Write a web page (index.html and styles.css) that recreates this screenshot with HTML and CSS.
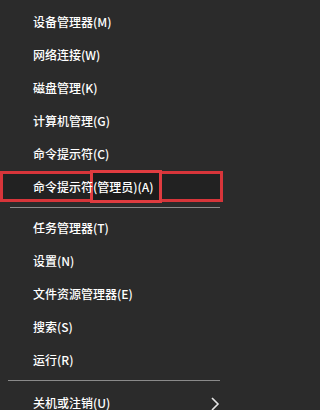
FILE: index.html
```html
<!DOCTYPE html>
<html lang="zh-CN">
<head>
<meta charset="utf-8">
<link rel="stylesheet" href="styles.css">
</head>
<body>
<div class="menu">
  <div class="item">设备管理器(M)</div>
  <div class="item">网络连接(W)</div>
  <div class="item">磁盘管理(K)</div>
  <div class="item">计算机管理(G)</div>
  <div class="item">命令提示符(C)</div>
  <div class="item marked">
    <span class="mark-outer"></span>
    <span class="mark-inner"></span>
    <span class="label">命令提示符(管理员)(A)</span>
  </div>
  <div class="sep sep-a"></div>
  <div class="item">任务管理器(T)</div>
  <div class="item">设置(N)</div>
  <div class="item">文件资源管理器(E)</div>
  <div class="item">搜索(S)</div>
  <div class="item">运行(R)</div>
  <div class="sep sep-b"></div>
  <div class="item has-sub">
    <span class="label">关机或注销(U)</span>
    <svg class="chev" width="10" height="14" viewBox="0 0 10 14"><polyline points="2,1 8,7 2,13" fill="none" stroke="#e6e6e6" stroke-width="1.6"/></svg>
  </div>
</div>
</body>
</html>
```

FILE: styles.css
```css
html, body {
  margin: 0;
  padding: 0;
  background: #2b2b2b;
}
body {
  width: 227px;
  height: 410px;
  overflow: hidden;
  font-family: "Noto Sans CJK SC", "Microsoft YaHei", sans-serif;
  font-size: 12px;
  color: #ffffff;
}
.menu {
  display: flex;
  flex-direction: column;
  padding-top: 5px;
}
.item {
  height: 33px;
  display: flex;
  align-items: center;
  padding-left: 33px;
  line-height: 1;
  white-space: nowrap;
  font-weight: 500;
}
.marked {
  position: relative;
}
.marked .label {
  position: relative;
  z-index: 2;
}
.mark-outer {
  position: absolute;
  left: 0;
  top: 1px;
  width: 223px;
  height: 31px;
  box-sizing: border-box;
  border: 3px solid #d7353a;
  background: #222222;
  z-index: 0;
}
.mark-inner {
  position: absolute;
  left: 90px;
  top: 0;
  width: 72px;
  height: 33px;
  box-sizing: border-box;
  border: 3px solid #e03c40;
  background: #1c1c1c;
  z-index: 1;
}
.sep {
  height: 1px;
  background: #8a8a8a;
}
.sep-a {
  margin: 4px 7px 3px 10px;
}
.sep-b {
  margin: 4px 7px 5px 8px;
}
.has-sub {
  justify-content: space-between;
  padding-right: 7px;
}
.chev {
  display: block;
  margin-top: 2px;
}
```
